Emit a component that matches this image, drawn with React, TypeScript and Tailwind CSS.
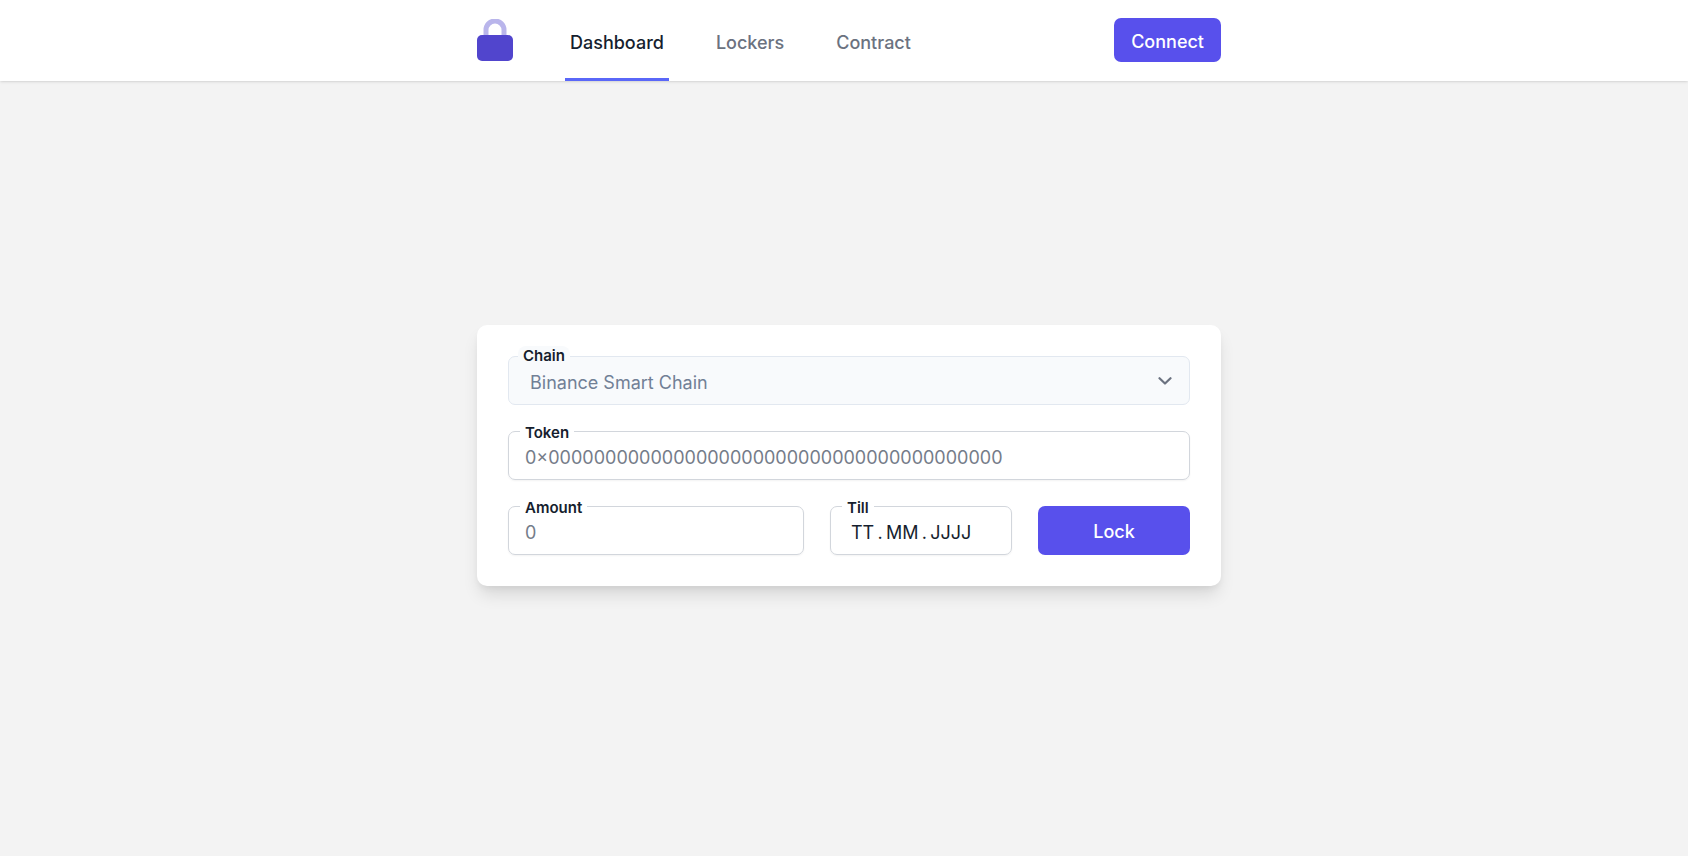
import { useState } from "react";

const NAV_LINKS = ["Dashboard", "Lockers", "Contract"];

const CHAINS = ["Binance Smart Chain", "Ethereum", "Polygon"];

const TOKEN_PLACEHOLDER = "0×" + "0".repeat(40);

// Thin spaces after the dots keep the date parts close together.
const DATE_PLACEHOLDER = "TT\u2009.\u2009MM\u2009.\u2009JJJJ";

function Logo() {
  return (
    <svg viewBox="0 0 36 42" className="h-[42px] w-9" aria-hidden="true">
      <path
        d="M9 18v-7a9 9 0 0 1 18 0v7"
        fill="none"
        stroke="#b9b5eb"
        strokeWidth="5"
      />
      <rect y="16" width="36" height="26" rx="5" fill="#5145cd" />
    </svg>
  );
}

function Header() {
  const [active, setActive] = useState("Dashboard");

  return (
    <header className="bg-white pl-2.5 shadow">
      <div className="mx-auto flex h-[81px] max-w-[744px] items-stretch">
        <a
          href="#home"
          aria-label="Home"
          className="mr-[52px] flex items-center pb-px"
        >
          <Logo />
        </a>
        <nav className="flex gap-[42px]">
          {NAV_LINKS.map((link) => (
            <a
              key={link}
              href={`#${link.toLowerCase()}`}
              onClick={() => setActive(link)}
              className={`flex items-center border-b-[3px] px-[5px] pt-2 text-lg font-medium ${
                link === active
                  ? "border-[#5a67f8] text-[#161e2e]"
                  : "border-transparent text-[#6b7280]"
              }`}
            >
              {link}
            </a>
          ))}
        </nav>
        <button
          type="button"
          className="mb-0.5 ml-auto h-11 self-center rounded-[7px] bg-[#5850ec] px-[17px] pt-1 text-lg font-medium text-white"
        >
          Connect
        </button>
      </div>
    </header>
  );
}

interface FieldProps {
  id: string;
  label: string;
  placeholder: string;
  inputClass: string;
}

function Field({ id, label, placeholder, inputClass }: FieldProps) {
  return (
    <div className="relative">
      <label
        htmlFor={id}
        className="absolute -top-2 left-3 bg-white px-[5px] text-[15px] leading-5 font-semibold text-[#161e2e]"
      >
        {label}
      </label>
      <input
        id={id}
        type="text"
        placeholder={placeholder}
        className={`block h-[49px] w-full rounded-[7px] border border-[#d2d6dc] pt-1 text-lg text-[#161e2e] shadow-xs ${inputClass}`}
      />
    </div>
  );
}

function ChainSelect() {
  return (
    <div className="relative">
      <label
        htmlFor="chain"
        className="absolute -top-2.5 left-2.5 rounded-lg bg-[#f8fafc] px-[5px] text-[15px] leading-5 font-semibold text-[#161e2e]"
      >
        Chain
      </label>
      <select
        id="chain"
        className="block h-[49px] w-full appearance-none rounded-[7px] border border-[#e2e8f0] bg-[#f8fafc] pt-1 pl-[21px] text-lg text-[#718096]"
      >
        {CHAINS.map((chain) => (
          <option key={chain}>{chain}</option>
        ))}
      </select>
      <svg
        viewBox="0 0 14 8"
        className="pointer-events-none absolute top-[21px] right-[18px] h-2 w-3.5"
        fill="none"
        stroke="#6b7280"
        strokeWidth="2.2"
        strokeLinecap="round"
        strokeLinejoin="round"
      >
        <path d="M1.5 1.2 7 6.5l5.5-5.3" />
      </svg>
    </div>
  );
}

export default function App() {
  return (
    <div className="flex min-h-screen flex-col bg-[#f3f3f3] font-['Inter',sans-serif]">
      <Header />
      <main className="flex flex-1 items-center pb-[26px] pl-2.5">
        <form
          onSubmit={(e) => e.preventDefault()}
          className="mx-auto flex w-full max-w-[744px] flex-col gap-[26px] rounded-[10px] bg-white p-[31px] shadow-[0_11px_17px_-3px_rgba(0,0,0,0.12),0_4px_7px_-2px_rgba(0,0,0,0.06)]"
        >
          <ChainSelect />
          <Field
            id="token"
            label="Token"
            placeholder={TOKEN_PLACEHOLDER}
            inputClass="px-4 placeholder:text-[#757c89]"
          />
          <div className="grid grid-cols-[1fr_182px_152px] gap-[26px]">
            <Field
              id="amount"
              label="Amount"
              placeholder="0"
              inputClass="px-4 placeholder:text-[#757c89]"
            />
            <Field
              id="till"
              label="Till"
              placeholder={DATE_PLACEHOLDER}
              inputClass="px-5 placeholder:text-[#161e2e]"
            />
            <button
              type="submit"
              className="rounded-[7px] bg-[#5850ec] pt-0.5 text-lg font-medium text-white"
            >
              Lock
            </button>
          </div>
        </form>
      </main>
    </div>
  );
}
